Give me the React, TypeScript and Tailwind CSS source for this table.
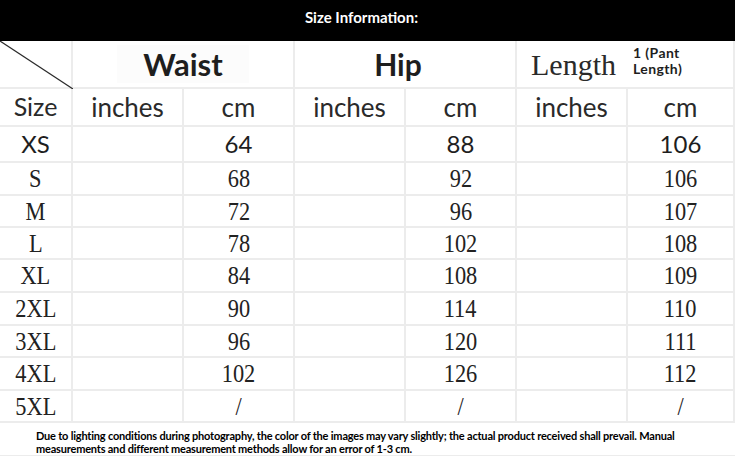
const rows = [
  { size: 'S', waist: '68', hip: '92', length: '106' },
  { size: 'M', waist: '72', hip: '96', length: '107' },
  { size: 'L', waist: '78', hip: '102', length: '108' },
  { size: 'XL', waist: '84', hip: '108', length: '109' },
  { size: '2XL', waist: '90', hip: '114', length: '110' },
  { size: '3XL', waist: '96', hip: '120', length: '111' },
  { size: '4XL', waist: '102', hip: '126', length: '112' },
  { size: '5XL', waist: '/', hip: '/', length: '/' },
]

const heights = ['h-[33px]', 'h-[32px]', 'h-[32px]', 'h-[33px]', 'h-[33px]', 'h-[32px]', 'h-[33px]', 'h-[32px]']

const cell = 'flex items-center justify-center border-r-2 border-b-2 border-[#ececec]'
const sans = "font-['Lato',sans-serif]"
const serif = "font-['Liberation_Serif',serif]"

const App = () => {
  return (
    <div className="w-[735px] h-[458px] overflow-hidden bg-white text-[#1e1e1e]">
      {/* Title bar */}
      <div className="h-[41px] bg-black flex items-center justify-center pb-[7px] pr-[12px]">
        <span className={`${sans} text-white text-[15px] font-bold`}>Size Information:</span>
      </div>

      <div className="grid grid-cols-[73px_111px_111px_111px_111px_111px_1fr]">
        {/* Group headers */}
        <div className="relative h-[48px] border-r-2 border-b-2 border-[#ececec]">
          <svg className="absolute inset-0" width="73" height="48" viewBox="0 0 73 48">
            <line x1="0" y1="0" x2="73" y2="48" stroke="#2a2a2a" strokeWidth="1.2" />
          </svg>
        </div>
        <div className={`${cell} col-span-2 h-[48px]`}>
          <span className={`${sans} text-[31px] font-bold bg-[#fcfcfc] px-[26px] leading-[38px]`}>Waist</span>
        </div>
        <div className={`${cell} col-span-2 h-[48px] pr-[14px]`}>
          <span className={`${sans} text-[30px] font-bold leading-[38px]`}>Hip</span>
        </div>
        <div className={`${cell} col-span-2 h-[48px] border-r-0 justify-start pl-[14px] gap-[17px]`}>
          <span className={`${serif} text-[30px] text-[#2a2a2a]`}>Length</span>
          <span className={`${sans} text-[14px] font-bold leading-[16px] tracking-[0.4px] mt-[-6px]`}>
            1 (Pant
            <br />
            Length)
          </span>
        </div>

        {/* Sub headers */}
        <div className={`${cell} h-[38px] ${sans} text-[25px] text-[#2a2a2a]`}>Size</div>
        {['inches', 'cm', 'inches', 'cm', 'inches', 'cm'].map((t, i) => (
          <div key={i} className={`${cell} h-[38px] ${sans} text-[26px] text-[#2a2a2a] ${i === 5 ? 'border-r-0' : ''}`}>
            {t}
          </div>
        ))}

        {/* XS row */}
        <div className={`${cell} h-[36px] ${sans} text-[24px]`}>XS</div>
        <div className={`${cell} h-[36px]`} />
        <div className={`${cell} h-[36px] ${sans} text-[24px]`}>64</div>
        <div className={`${cell} h-[36px]`} />
        <div className={`${cell} h-[36px] ${sans} text-[24px]`}>88</div>
        <div className={`${cell} h-[36px]`} />
        <div className={`${cell} h-[36px] border-r-0 ${sans} text-[24px]`}>106</div>

        {rows.map((r, i) => {
          const h = heights[i]
          const txt = `${serif} text-[26px] scale-x-[0.86] text-[#222]`
          return [
            <div key={`${r.size}-s`} className={`${cell} ${h}`}>
              <span className={txt}>{r.size}</span>
            </div>,
            <div key={`${r.size}-wi`} className={`${cell} ${h}`} />,
            <div key={`${r.size}-wc`} className={`${cell} ${h}`}>
              <span className={txt}>{r.waist}</span>
            </div>,
            <div key={`${r.size}-hi`} className={`${cell} ${h}`} />,
            <div key={`${r.size}-hc`} className={`${cell} ${h}`}>
              <span className={txt}>{r.hip}</span>
            </div>,
            <div key={`${r.size}-li`} className={`${cell} ${h}`} />,
            <div key={`${r.size}-lc`} className={`${cell} ${h} border-r-0`}>
              <span className={txt}>{r.length}</span>
            </div>,
          ]
        })}
      </div>

      {/* Footnote */}
      <div className="h-[33px] border-b border-[#ececec] pl-[36px] pt-[6px]">
        <p className={`${sans} text-[11px] font-bold leading-[13px] text-black tracking-[-0.2px]`}>
          Due to lighting conditions during photography, the color of the images may vary slightly; the actual product received shall prevail. Manual
          <br />
          measurements and different measurement methods allow for an error of 1-3 cm.
        </p>
      </div>
    </div>
  )
}

export default App
